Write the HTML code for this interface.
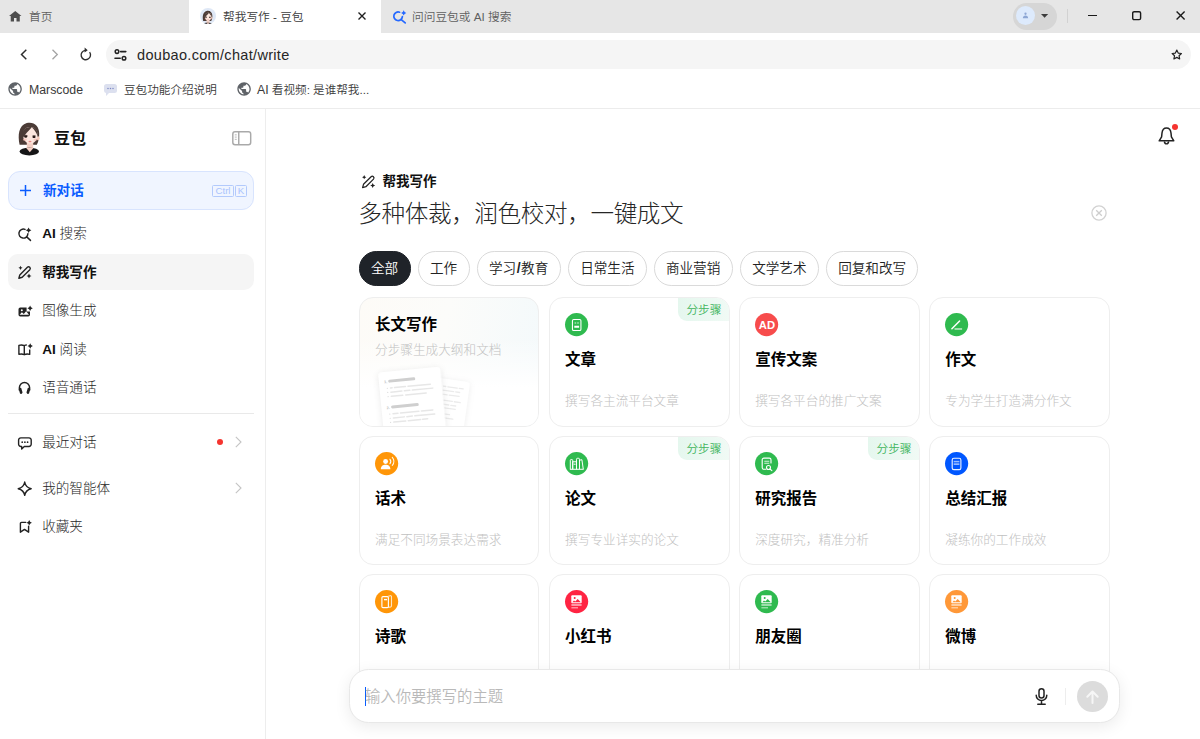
<!DOCTYPE html>
<html lang="zh-CN">
<head>
<meta charset="utf-8">
<title>帮我写作 - 豆包</title>
<style>
*{box-sizing:border-box;margin:0;padding:0}
html,body{width:1200px;height:739px;overflow:hidden;background:#fff}
body{font-family:"Liberation Sans","Noto Sans CJK SC",sans-serif;color:#1f1f1f;position:relative;font-weight:350}
.abs{position:absolute}
svg{display:block;overflow:visible}
/* ---------- browser chrome ---------- */
#tabbar{position:absolute;left:0;top:0;width:1200px;height:33px;background:#e6e6e6}
.tab{position:absolute;top:0;height:33px;font-size:11.700px;line-height:34px;color:#5f5f5f;white-space:nowrap}
#tab2{left:189px;width:192px;background:#fff;color:#3c3c3c}
#toolbar{position:absolute;left:0;top:33px;width:1200px;height:40px;background:#fff}
#urlpill{position:absolute;left:106px;top:7px;width:1085px;height:29px;border-radius:14.5px;background:#f5f5f5}
#url{position:absolute;left:31px;top:0;line-height:30px;font-size:14.500px;color:#262626;letter-spacing:.32px;font-weight:400}
#bookmarks{position:absolute;left:0;top:73px;width:1200px;height:36px;background:#fff;border-bottom:1px solid #ececec;font-size:11.600px;color:#3a3a3a}
.bm{position:absolute;top:0;line-height:34px;white-space:nowrap}
/* ---------- sidebar ---------- */
#sidebar{position:absolute;left:0;top:109px;width:266px;height:630px;border-right:1px solid #ededed;background:#fff}
.nav{position:absolute;left:8px;width:246px;height:36px;border-radius:10px;font-size:13.600px;line-height:36px;color:#262626;font-weight:300;white-space:nowrap}
.nav .t{position:absolute;left:34.200px;top:1.100px}
.nav b{font-weight:700;color:#111}
.nav svg{position:absolute;left:10px;top:10.500px}
/* ---------- main ---------- */
#main{position:absolute;left:266px;top:109px;width:934px;height:630px;overflow:hidden}
.chip{position:absolute;top:142.300px;height:34.500px;border:1px solid #dadada;border-radius:17.250px;font-size:13.600px;line-height:33px;text-align:center;color:#222;background:#fff;white-space:nowrap}
.card{position:absolute;width:180.450px;height:129px;border:1px solid #eeeeee;border-radius:14px;background:#fff;overflow:hidden}
.card .ic{position:absolute;left:15.200px;top:15.100px}
.card .tt{position:absolute;left:15px;top:50.200px;font-size:15.5px;font-weight:700;color:#000;line-height:24px;white-space:nowrap}
.card .ds{position:absolute;left:15px;top:94px;font-size:12.650px;color:#c1c1c1;line-height:18px;white-space:nowrap;font-weight:300}
.card .bdg{position:absolute;right:0;top:0;width:50.200px;height:23px;background:linear-gradient(90deg,#e5f7ee,#f0faf5);color:#3fb55d;font-size:11.700px;line-height:24px;padding-left:1px;text-align:center;border-bottom-left-radius:9px}
</style>
</head>
<body>
<!-- TAB BAR -->
<div id="tabbar">
  <div class="tab" id="tab1" style="left:0;width:189px"><span class="abs" style="left:29px">首页</span></div>
  <div class="tab" id="tab2"><span class="abs" style="left:34px">帮我写作 - 豆包</span></div>
  <div class="tab" id="tab3" style="left:381px;width:300px"><span class="abs" style="left:31px">问问豆包或 AI 搜索</span></div>

  <svg class="abs" style="left:8.500px;top:11.200px" width="12.500" height="10.400" viewBox="0 0 13 12" preserveAspectRatio="none"><path d="M6.500 0L0 5.800h1.800V12h3.400V8h2.600v4h3.400V5.800H13z" fill="#4d4d4d"/></svg>
  <div class="abs" style="left:200px;top:8px;width:16px;height:16px;border-radius:50%;background:#dfe8f6;overflow:hidden"><svg class="abs" style="left:2.4px;top:1.6px" width="11.2" height="16.8" viewBox="0 0 24 36">
<path d="M2.600 23.800C.6 14 1.600 4.500 9.800 2 17 .3 22.300 5 22.200 12.500 22.300 16.500 21.600 20.500 19.800 23.800z" fill="#4b3b36"/>
<path d="M9.800 19h6.400v8.500l-3.200 3.500-3.200-3.500z" fill="#f3cfc4"/>
<ellipse cx="12.300" cy="30.600" rx="9.700" ry="3.900" fill="#151516"/>
<path d="M9.200 27l3.600 4.300L16.500 27z" fill="#f3cfc4"/>
<ellipse cx="21.200" cy="17.300" rx="1.400" ry="2.100" fill="#f6cabb"/>
<path d="M6 14C6 8.500 9 6 13.200 6S20.600 9 20.600 14.500C20.600 19 17 22.600 13.200 22.600S6 19 6 14z" fill="#fce6de"/>
<path d="M5.300 17.500C4.300 10 8 5.300 14.800 6.200 12 9.500 8.500 12.500 5.300 17.500z" fill="#4b3b36"/>
<path d="M14.800 6.200C18.500 6.300 21 9.800 21 15.500 19.500 12 17.500 8.800 14.800 6.200z" fill="#4b3b36"/>
<ellipse cx="8.700" cy="15.600" rx="1.600" ry="1.250" fill="#2a1b18"/><ellipse cx="17" cy="15.900" rx="1.500" ry="1.200" fill="#2a1b18"/>
<path d="M6.800 14.900q1.800-1.300 3.800-.2M15.300 15q1.700-1 3.500 0" stroke="#2a1b18" stroke-width=".6" fill="none"/>
<ellipse cx="7.800" cy="18.600" rx="1.900" ry="1.200" fill="#f7bdb4" opacity=".75"/><ellipse cx="18.300" cy="18.700" rx="1.700" ry="1.100" fill="#f7bdb4" opacity=".75"/>
<ellipse cx="13" cy="20.500" rx="1.500" ry=".85" fill="#e68a87"/>
</svg></div>
  <svg class="abs" style="left:358px;top:12px" width="8" height="8" viewBox="0 0 8 8"><path d="M.5.500l7 7M7.500.500l-7 7" stroke="#1f1f1f" stroke-width="1.400" fill="none"/></svg>
  <svg class="abs" style="left:393px;top:10px" width="14" height="14" viewBox="0 0 14 14"><path d="M6.600 2.200A4.300 4.300 0 1 0 9.400 6.700M8.200 9.600l4 3.300" stroke="#2468ff" stroke-width="1.700" fill="none" stroke-linecap="round"/><path d="M10.70 0.30Q11.17 2.43 13.30 2.90Q11.17 3.37 10.70 5.50Q10.23 3.37 8.10 2.90Q10.23 2.43 10.70 0.30z" fill="#2468ff"/></svg>
  <div class="abs" style="left:1012.600px;top:2.600px;width:44.400px;height:27.200px;border-radius:13.600px;background:#d6d6d6"></div>
  <div class="abs" style="left:1016.300px;top:6.400px;width:19px;height:19px;border-radius:50%;background:#ddeafc"></div>
  <svg class="abs" style="left:1022.300px;top:12.400px" width="7" height="7" viewBox="0 0 8 8"><circle cx="4" cy="2" r="1.300" fill="#8ea7d4"/><path d="M1 7.200c0-2.200 1.200-3.200 3-3.200S7 5 7 7.200z" fill="#8ea7d4"/></svg>
  <svg class="abs" style="left:1041.200px;top:14.200px" width="7.200" height="3.800" viewBox="0 0 8 4.500" preserveAspectRatio="none"><path d="M0 0h8L4 4.500z" fill="#3c3c3c"/></svg>
  <div class="abs" style="left:1067px;top:9px;width:1px;height:14px;background:#d2d2d2"></div>
  <div class="abs" style="left:1087.800px;top:14.700px;width:9.500px;height:1.300px;background:#1a1a1a"></div>
  <svg class="abs" style="left:1131.600px;top:10.800px" width="9.300" height="9.300" viewBox="0 0 9.300 9.300"><rect x=".7" y=".7" width="7.900" height="7.900" rx="1.400" fill="none" stroke="#1a1a1a" stroke-width="1.400"/></svg>
  <svg class="abs" style="left:1176.300px;top:11.200px" width="9.200" height="9.200" viewBox="0 0 11 11"><path d="M.7.7l9.600 9.600M10.300.7L.7 10.300" stroke="#1a1a1a" stroke-width="1.650" fill="none"/></svg>
</div>
<!-- TOOLBAR -->
<div id="toolbar">

  <svg class="abs" style="left:20px;top:16px" width="8" height="11" viewBox="0 0 8 11"><path d="M6.300 .8L1.500 5.500l4.800 4.700" stroke="#2d2d2d" stroke-width="1.450" fill="none"/></svg>
  <svg class="abs" style="left:51.200px;top:16px" width="8" height="11" viewBox="0 0 8 11"><path d="M1.500 .8L6.300 5.500l-4.800 4.700" stroke="#a3a3a3" stroke-width="1.300" fill="none"/></svg>
  <svg class="abs" style="left:79px;top:14px" width="13" height="14" viewBox="0 0 13 14"><path d="M10.600 5.200A4.700 4.700 0 1 1 6.400 3.300" stroke="#2d2d2d" stroke-width="1.350" fill="none"/><path d="M5.600 .6l3.100 2.700-3.100 2.300z" fill="#2d2d2d"/></svg>
  <div id="urlpill"><svg class="abs" style="left:8px;top:8px" width="13" height="13" viewBox="0 0 13 13"><circle cx="3" cy="3.600" r="1.800" fill="none" stroke="#222" stroke-width="1.500"/><path d="M6.600 3.600h5.200M1 10.300h5.200" stroke="#222" stroke-width="1.600" fill="none" stroke-linecap="round"/><circle cx="10" cy="10.300" r="1.800" fill="none" stroke="#222" stroke-width="1.500"/></svg>
  <svg class="abs" style="left:1065.200px;top:9px" width="11.600" height="10.800" viewBox="0 0 14 13"><path d="M7 1.300l1.700 3.600 3.900.5-2.900 2.700.8 3.900L7 10.100 3.500 12l.8-3.900L1.400 5.400l3.900-.5z" fill="none" stroke="#222" stroke-width="1.400" stroke-linejoin="round"/></svg><div id="url">doubao.com/chat/write</div></div>
</div>
<!-- BOOKMARKS -->
<div id="bookmarks">
<svg class="abs" style="left:7.2px;top:8.400px" width="16.200" height="16.200" viewBox="0 0 24 24"><path d="M12 2C6.480 2 2 6.480 2 12s4.480 10 10 10 10-4.480 10-10S17.520 2 12 2zm-1 17.930c-3.950-.49-7-3.850-7-7.930 0-.62.080-1.210.21-1.790L9 15v1c0 1.100.9 2 2 2v1.930zm6.900-2.540c-.26-.81-1-1.390-1.900-1.390h-1v-3c0-.55-.45-1-1-1H8v-2h2c.55 0 1-.45 1-1V7h2c1.100 0 2-.9 2-2v-.41c2.930 1.190 5 4.060 5 7.410 0 2.080-.8 3.970-2.100 5.390z" fill="#5f6368"/></svg>
  <svg class="abs" style="left:104px;top:11px" width="13" height="12" viewBox="0 0 13 12"><path d="M2.500 0h8A2.500 2.500 0 0 1 13 2.500v4A2.500 2.500 0 0 1 10.500 9H5l-3 3V9A2.500 2.500 0 0 1 0 6.500v-4A2.500 2.500 0 0 1 2.500 0z" fill="#dce0ef"/><circle cx="4" cy="4.500" r=".75" fill="#7f89c4"/><circle cx="6.500" cy="4.500" r=".75" fill="#7f89c4"/><circle cx="9" cy="4.500" r=".75" fill="#7f89c4"/></svg>
<svg class="abs" style="left:235.65px;top:8.400px" width="16.200" height="16.200" viewBox="0 0 24 24"><path d="M12 2C6.480 2 2 6.480 2 12s4.480 10 10 10 10-4.480 10-10S17.520 2 12 2zm-1 17.930c-3.950-.49-7-3.850-7-7.930 0-.62.080-1.210.21-1.790L9 15v1c0 1.100.9 2 2 2v1.930zm6.900-2.540c-.26-.81-1-1.390-1.900-1.390h-1v-3c0-.55-.45-1-1-1H8v-2h2c.55 0 1-.45 1-1V7h2c1.100 0 2-.9 2-2v-.41c2.930 1.190 5 4.060 5 7.410 0 2.080-.8 3.970-2.100 5.390z" fill="#5f6368"/></svg>  <span class="bm" style="left:29px;font-size:12.300px;font-weight:400">Marscode</span>
  <span class="bm" style="left:124px">豆包功能介绍说明</span>
  <span class="bm" style="left:257px"><span style="font-size:12.300px">AI</span> 看视频: 是谁帮我...</span>
</div>
<!-- SIDEBAR -->
<div id="sidebar">
<svg class="abs" style="left:17px;top:12px" width="24" height="36" viewBox="0 0 24 36">
<path d="M2.600 23.800C.6 14 1.600 4.500 9.800 2 17 .3 22.300 5 22.200 12.500 22.300 16.500 21.600 20.500 19.800 23.800z" fill="#4b3b36"/>
<path d="M9.800 19h6.400v8.500l-3.200 3.500-3.200-3.500z" fill="#f3cfc4"/>
<ellipse cx="12.300" cy="30.600" rx="9.700" ry="3.900" fill="#151516"/>
<path d="M9.200 27l3.600 4.300L16.500 27z" fill="#f3cfc4"/>
<ellipse cx="21.200" cy="17.300" rx="1.400" ry="2.100" fill="#f6cabb"/>
<path d="M6 14C6 8.500 9 6 13.200 6S20.600 9 20.600 14.500C20.600 19 17 22.600 13.200 22.600S6 19 6 14z" fill="#fce6de"/>
<path d="M5.300 17.500C4.300 10 8 5.300 14.800 6.200 12 9.500 8.500 12.500 5.300 17.500z" fill="#4b3b36"/>
<path d="M14.800 6.200C18.500 6.300 21 9.800 21 15.500 19.500 12 17.500 8.800 14.800 6.200z" fill="#4b3b36"/>
<ellipse cx="8.700" cy="15.600" rx="1.600" ry="1.250" fill="#2a1b18"/><ellipse cx="17" cy="15.900" rx="1.500" ry="1.200" fill="#2a1b18"/>
<path d="M6.800 14.900q1.800-1.300 3.800-.2M15.300 15q1.700-1 3.500 0" stroke="#2a1b18" stroke-width=".6" fill="none"/>
<ellipse cx="7.800" cy="18.600" rx="1.900" ry="1.200" fill="#f7bdb4" opacity=".75"/><ellipse cx="18.300" cy="18.700" rx="1.700" ry="1.100" fill="#f7bdb4" opacity=".75"/>
<ellipse cx="13" cy="20.500" rx="1.500" ry=".85" fill="#e68a87"/>
</svg>
  <div class="abs" style="left:54px;top:17.800px;font-size:16px;font-weight:700;line-height:24px;color:#111">豆包</div>
  <svg class="abs" style="left:232.300px;top:21.700px" width="19.500" height="14.500" viewBox="0 0 20 15"><rect x=".75" y=".75" width="18.500" height="13.500" rx="2.300" fill="none" stroke="#a9a9a9" stroke-width="1.500"/><path d="M6.900 1v13" stroke="#a9a9a9" stroke-width="1.500"/><path d="M2.800 4h2M2.800 6.300h2M2.800 8.600h2" stroke="#b4b4b4" stroke-width="1"/></svg>
  <div class="abs" style="left:8px;top:62px;width:246px;height:38.700px;border-radius:12px;background:#f0f5ff;border:1px solid #d8e4fe"></div>
  <svg class="abs" style="left:20px;top:76px" width="11" height="11" viewBox="0 0 11 11"><path d="M5.500 0v11M0 5.500h11" stroke="#0a5cff" stroke-width="1.500"/></svg>
  <div class="abs" style="left:43px;top:72.300px;font-size:13.600px;font-weight:700;line-height:20px;color:#0a5cff">新对话</div>
  <div class="abs" style="left:212px;top:76px;width:22px;height:12px;border:1px solid #b3cafc;border-radius:1.500px;font-size:9.700px;line-height:10px;text-align:center;color:#a9c3fd">Ctrl</div>
  <div class="abs" style="left:235px;top:76px;width:12px;height:12px;border:1px solid #b3cafc;border-radius:1.500px;font-size:9.700px;line-height:10px;text-align:center;color:#a9c3fd">K</div>
  <div class="nav" style="top:106px"><svg width="15" height="15" viewBox="0 0 15 15"><path d="M7 3.400A4.500 4.500 0 1 0 9.900 7.800M8.700 10.900l3.800 3.500" stroke="#222" stroke-width="1.450" fill="none" stroke-linecap="round"/><path d="M10.60 1.50Q11.10 3.80 13.40 4.30Q11.10 4.80 10.60 7.10Q10.10 4.80 7.80 4.30Q10.10 3.80 10.60 1.50z" fill="#222"/></svg><span class="t"><b>AI</b> 搜索</span></div>
  <div class="nav" style="top:144.700px;height:36.500px;background:#f5f5f5"><svg width="15" height="15" viewBox="0 0 15 15"><g transform="translate(.3 1.600)"><path d="M.6 12.600L1.500 9.300 9.100 1.700A1.700 1.700 0 0 1 11.500 4.100L3.900 11.700z" stroke="#222" stroke-width="1.400" fill="none" stroke-linejoin="round"/><path d="M2.20 0.10Q2.58 1.82 4.30 2.20Q2.58 2.58 2.20 4.30Q1.82 2.58 0.10 2.20Q1.82 1.82 2.20 0.10zM10.70 7.90Q11.15 9.95 13.20 10.40Q11.15 10.85 10.70 12.90Q10.25 10.85 8.20 10.40Q10.25 9.95 10.70 7.90z" fill="#222"/></g></svg><span class="t"><b>帮我写作</b></span></div>
  <div class="nav" style="top:183px"><svg width="15" height="15" viewBox="0 0 15 15"><path d="M2.300 4.500H8.600V8.400H12V11.700A1.800 1.800 0 0 1 10.200 13.500H2.300A1.800 1.800 0 0 1 .5 11.700V6.300A1.800 1.800 0 0 1 2.300 4.500z" fill="#222"/><path d="M1.600 11.700l2.300-2.400 1.900 1.700 2.300-2.700 2.900 3.400z" fill="#fff"/><circle cx="3.800" cy="7.300" r="1" fill="#fff"/><path d="M12.10 2.60Q12.59 4.81 14.80 5.30Q12.59 5.79 12.10 8.00Q11.61 5.79 9.40 5.30Q11.61 4.81 12.10 2.60z" fill="#222"/></svg><span class="t">图像生成</span></div>
  <div class="nav" style="top:222px"><svg width="15" height="15" viewBox="0 0 15 15"><path d="M6.300 3.600C4.800 2.900 2.700 2.800 .9 3.300V12.300C2.700 11.800 4.800 11.900 6.300 12.700C7.800 11.900 9.900 11.800 11.700 12.300V7.400M6.300 3.600V12.700M6.300 3.600C7.100 3.200 8 3 8.900 2.900" stroke="#222" stroke-width="1.400" fill="none" stroke-linejoin="round"/><path d="M12.20 1.30Q12.69 3.51 14.90 4.00Q12.69 4.49 12.20 6.70Q11.71 4.49 9.50 4.00Q11.71 3.51 12.20 1.30z" fill="#222"/></svg><span class="t"><b>AI</b> 阅读</span></div>
  <div class="nav" style="top:260px"><svg width="15" height="15" viewBox="0 0 15 15"><path d="M1.400 10.500V7.500A5.100 5.100 0 0 1 11.600 7.500V10.500" stroke="#222" stroke-width="1.450" fill="none"/><path d="M.8 9.300A1.500 1.500 0 0 1 3.200 8.100L4.500 12.300A1.500 1.500 0 0 1 2 13.500zM12.200 9.300A1.500 1.500 0 0 0 9.800 8.100L8.500 12.300A1.500 1.500 0 0 0 11 13.500z" fill="#222"/></svg><span class="t">语音通话</span></div>
  <div class="nav" style="top:315px"><svg width="15" height="15" viewBox="0 0 15 15"><path d="M2.800 2.900H11A2.200 2.200 0 0 1 13.200 5.100V9.300A2.200 2.200 0 0 1 11 11.500H6.300L3.700 14V11.500H2.800A2.200 2.200 0 0 1 .6 9.300V5.100A2.200 2.200 0 0 1 2.800 2.900z" stroke="#222" stroke-width="1.400" fill="none" stroke-linejoin="round"/><circle cx="4.200" cy="7.200" r=".85" fill="#222"/><circle cx="6.900" cy="7.200" r=".85" fill="#222"/><circle cx="9.600" cy="7.200" r=".85" fill="#222"/></svg><span class="t">最近对话</span></div>
  <div class="nav" style="top:361px"><svg width="15" height="15" viewBox="0 0 15 15"><path d="M6.700 1C7.300 4.800 8.900 6.700 13.200 7.700C8.900 8.700 7.300 10.600 6.700 14.400C6.100 10.600 4.500 8.700 .2 7.700C4.500 6.700 6.100 4.800 6.700 1z" stroke="#222" stroke-width="1.400" fill="none" stroke-linejoin="round"/></svg><span class="t">我的智能体</span></div>
  <div class="nav" style="top:399px"><svg width="15" height="15" viewBox="0 0 15 15"><path d="M7.700 3.400H3.500A1.100 1.100 0 0 0 2.400 4.500V13.200L6.500 10.400 10.600 13.200V7.300" stroke="#222" stroke-width="1.400" fill="none" stroke-linejoin="round" stroke-linecap="round"/><path d="M11.20 1.10Q11.69 3.31 13.90 3.80Q11.69 4.29 11.20 6.50Q10.71 4.29 8.50 3.80Q10.71 3.31 11.20 1.10z" fill="#222"/></svg><span class="t">收藏夹</span></div>
  <div class="abs" style="left:8px;top:304px;width:246px;height:1px;background:#e9e9e9"></div>
  <div class="abs" style="left:217px;top:330px;width:6px;height:6px;border-radius:50%;background:#f5342f"></div>
  <svg class="abs" style="left:235px;top:327px" width="7" height="12" viewBox="0 0 7 12"><path d="M.8.800L6 6 .8 11.200" stroke="#c4c4c4" stroke-width="1.100" fill="none"/></svg>
  <svg class="abs" style="left:235px;top:373px" width="7" height="12" viewBox="0 0 7 12"><path d="M.8.800L6 6 .8 11.200" stroke="#c4c4c4" stroke-width="1.100" fill="none"/></svg>
</div>
<!-- MAIN -->
<div id="main">
  <svg class="abs" style="left:892.2px;top:18px" width="17" height="19" viewBox="0 0 17 19"><path d="M8.500 1.100C6 1.100 4.300 3.200 4 6l-.4 3.800L1.200 13.800h14.600L13.400 9.800 13 6C12.700 3.200 11 1.100 8.500 1.100z" stroke="#222" stroke-width="1.500" fill="none" stroke-linejoin="round"/><path d="M6.300 14.500c.3 1.600 1.100 2.400 2.200 2.400s1.900-.8 2.200-2.400" stroke="#222" stroke-width="1.400" fill="none"/></svg>
  <div class="abs" style="left:906.2px;top:15.4px;width:6px;height:6px;border-radius:50%;background:#f5342f"></div>
  <svg class="abs" style="left:96px;top:66.200px" width="14" height="14" viewBox="0 0 14 14"><path d="M.6 12.600L1.500 9.300 9.100 1.700A1.700 1.700 0 0 1 11.500 4.100L3.900 11.700z" stroke="#222" stroke-width="1.250" fill="none" stroke-linejoin="round"/><path d="M2.20 0.10Q2.58 1.82 4.30 2.20Q2.58 2.58 2.20 4.30Q1.82 2.58 0.10 2.20Q1.82 1.82 2.20 0.10zM10.70 7.90Q11.15 9.95 13.20 10.40Q11.15 10.85 10.70 12.90Q10.25 10.85 8.20 10.40Q10.25 9.95 10.70 7.90z" fill="#222"/></svg>
  <div class="abs" style="left:116.5px;top:64px;font-size:13.500px;font-weight:700;line-height:18px;color:#111;white-space:nowrap">帮我写作</div>
  <div class="abs" id="h1" style="left:92.300px;top:87.500px;font-size:23.600px;line-height:34px;color:#262626;white-space:nowrap;font-weight:300;letter-spacing:-.38px">多种体裁，润色校对，一键成文</div>
  <svg class="abs" style="left:824.5px;top:96px" width="16" height="16" viewBox="0 0 16 16"><circle cx="8" cy="8" r="7.100" fill="none" stroke="#d2d2d2" stroke-width="1.300"/><path d="M5.200 5.200l5.600 5.600M10.800 5.200l-5.600 5.600" stroke="#cdcdcd" stroke-width="1.300"/></svg>
  <div class="chip" style="left:92.75px;width:51.75px;background:#1f2329;border-color:#1f2329;color:#fff">全部</div>
  <div class="chip" style="left:151.5px;width:52.0px">工作</div>
  <div class="chip" style="left:210.75px;width:83.75px">学习<span style="font-weight:700;font-size:14px;margin:0 .5px">/</span>教育</div>
  <div class="chip" style="left:302px;width:78.75px">日常生活</div>
  <div class="chip" style="left:387.75px;width:78.75px">商业营销</div>
  <div class="chip" style="left:474px;width:78.75px">文学艺术</div>
  <div class="chip" style="left:560.25px;width:91.75px">回复和改写</div>
  <div class="card" style="left:93.0px;top:187.9px;height:130px;background:linear-gradient(100deg,#fdfbf7 0%,#fcfcfa 45%,#f3f9fb 100%)">
    <div class="abs" style="left:0;top:40px;width:180px;height:90px;background:linear-gradient(180deg,rgba(255,255,255,0),#fff 55%)"></div>
    <div class="tt" style="top:15.500px">长文写作</div>
    <div class="ds" style="top:43.500px">分步骤生成大纲和文档</div>
    <svg class="abs" style="left:0;top:0" width="180" height="129" viewBox="0 0 180 129"><g transform="translate(65.600 78) rotate(8)" style="filter:drop-shadow(0 1px 3px rgba(0,0,0,.07))"><rect x="0" y="0" width="45" height="70" rx="3.500" fill="#fff"/></g><g transform="translate(65.600 78) rotate(8)"><path d="M19.0 7.6H21.5M23.5 7.6H33.0M35.0 7.6H39.0" stroke="#ebebeb" stroke-width="1.3" stroke-linecap="round"/><path d="M19.0 11.6H30.0M32.0 11.6H36.0" stroke="#ebebeb" stroke-width="1.3" stroke-linecap="round"/><path d="M19.0 15.6H24.0M26.0 15.6H36.0" stroke="#ebebeb" stroke-width="1.3" stroke-linecap="round"/><path d="M19.0 21.5H30.0M32.0 21.5H38.0" stroke="#ebebeb" stroke-width="1.3" stroke-linecap="round"/><path d="M19.0 25.5H27.0M29.0 25.5H34.0" stroke="#ebebeb" stroke-width="1.3" stroke-linecap="round"/><path d="M19.0 29.0H21.0M23.0 29.0H34.0" stroke="#ebebeb" stroke-width="1.3" stroke-linecap="round"/><path d="M19.0 35.0H29.0" stroke="#ebebeb" stroke-width="1.3" stroke-linecap="round"/><path d="M19.0 39.0H33.0" stroke="#ebebeb" stroke-width="1.3" stroke-linecap="round"/><path d="M19.0 42.5H24.0" stroke="#ebebeb" stroke-width="1.3" stroke-linecap="round"/><path d="M19.0 46.0H23.0" stroke="#ebebeb" stroke-width="1.3" stroke-linecap="round"/></g><g transform="translate(18 74.600) rotate(-5.500)" style="filter:drop-shadow(0 1px 3px rgba(0,0,0,.09))"><rect x="0" y="0" width="62.500" height="80" rx="3.500" fill="#fff"/></g><g transform="translate(18 74.600) rotate(-5.500)"><text x="5.200" y="11.300" font-size="3.800" font-weight="700" fill="#bdbdbd" font-family="Liberation Sans,sans-serif">1.</text><path d="M10.8 9.6H35.0" stroke="#cfcfcf" stroke-width="3" stroke-linecap="round"/><path d="M11.0 16.5H12.6M15.0 16.5H26.0M28.5 16.5H51.0" stroke="#e7e7e7" stroke-width="1.5" stroke-linecap="round"/><path d="M11.0 20.7H22.0M24.5 20.7H30.0M32.5 20.7H53.0" stroke="#e7e7e7" stroke-width="1.5" stroke-linecap="round"/><path d="M11.0 24.9H22.5M25.5 24.9H46.0" stroke="#e7e7e7" stroke-width="1.5" stroke-linecap="round"/><circle cx="7.800" cy="16.5" r=".6" fill="#dcdcdc"/><circle cx="7.800" cy="20.7" r=".6" fill="#dcdcdc"/><circle cx="7.800" cy="24.9" r=".6" fill="#dcdcdc"/><text x="5.200" y="37.300" font-size="3.800" font-weight="700" fill="#bdbdbd" font-family="Liberation Sans,sans-serif">2.</text><path d="M11.2 35.6H36.0" stroke="#cfcfcf" stroke-width="3" stroke-linecap="round"/><path d="M11.0 42.4H16.0M18.5 42.4H37.0M39.5 42.4H51.0" stroke="#e7e7e7" stroke-width="1.5" stroke-linecap="round"/><path d="M11.0 46.6H22.0M24.5 46.6H30.0M32.5 46.6H52.5" stroke="#e7e7e7" stroke-width="1.5" stroke-linecap="round"/><path d="M11.0 50.8H23.0M25.5 50.8H38.0M40.0 50.8H45.0" stroke="#e7e7e7" stroke-width="1.5" stroke-linecap="round"/><circle cx="7.800" cy="42.4" r=".6" fill="#dcdcdc"/><circle cx="7.800" cy="46.6" r=".6" fill="#dcdcdc"/><circle cx="7.800" cy="50.8" r=".6" fill="#dcdcdc"/></g></svg>
  </div>
  <div class="card" style="left:283.1px;top:187.9px;height:130px"><svg class="ic" width="23.200" height="23.200" viewBox="0 0 23.200 23.200"><circle cx="11.600" cy="11.600" r="11.600" fill="#2fba4f"/><rect x="7.450" y="6.550" width="8.500" height="10.900" rx="1.300" fill="none" stroke="#fff" stroke-width="1.100"/><path d="M9.600 10h1.600M12.200 10h1.600" stroke="#fff" stroke-width="1.300" opacity=".55"/><path d="M9.300 13.700h4.800" stroke="#fff" stroke-width="1.900"/></svg><div class="tt">文章</div><div class="ds">撰写各主流平台文章</div><div class="bdg">分步骤</div></div>
  <div class="card" style="left:473.2px;top:187.9px;height:130px"><svg class="ic" width="23.200" height="23.200" viewBox="0 0 23.200 23.200"><circle cx="11.600" cy="11.600" r="11.600" fill="#f74c4c"/><text x="11.900" y="16.100" font-family="Liberation Sans,sans-serif" font-size="11.300" font-weight="700" fill="#fff" text-anchor="middle">AD</text></svg><div class="tt">宣传文案</div><div class="ds">撰写各平台的推广文案</div></div>
  <div class="card" style="left:663.3px;top:187.9px;height:130px"><svg class="ic" width="23.200" height="23.200" viewBox="0 0 23.200 23.200"><circle cx="11.600" cy="11.600" r="11.600" fill="#2fba4f"/><path d="M6.900 15.700L14.600 8" stroke="#fff" stroke-width="1.500" fill="none" stroke-linecap="round"/><path d="M9.500 16h7.600" stroke="#fff" stroke-width="1.600" opacity=".65"/></svg><div class="tt">作文</div><div class="ds">专为学生打造满分作文</div></div>
  <div class="card" style="left:93.0px;top:327.15px;height:128.85px"><svg class="ic" width="23.200" height="23.200" viewBox="0 0 23.200 23.200"><circle cx="11.600" cy="11.600" r="11.600" fill="#ff9608"/><circle cx="10.600" cy="9.500" r="2.450" fill="#fff"/><path d="M5.800 17.300C5.800 14.200 8 12.800 10.600 12.800S15.400 14.200 15.400 17.300z" fill="#fff"/><path d="M15 7.300C15.900 8.500 15.900 10.500 15 11.700" stroke="#fff" stroke-width="1.100" fill="none" stroke-linecap="round"/><path d="M17.300 5.400C19.200 7.700 19.200 11.100 17.300 13.400" stroke="#fff" stroke-width="1.100" fill="none" stroke-linecap="round" opacity=".9"/></svg><div class="tt">话术</div><div class="ds">满足不同场景表达需求</div></div>
  <div class="card" style="left:283.1px;top:327.15px;height:128.85px"><svg class="ic" width="23.200" height="23.200" viewBox="0 0 23.200 23.200"><circle cx="11.600" cy="11.600" r="11.600" fill="#2fba4f"/><path d="M5.300 17.300V8.400A.8 .8 0 0 1 6.100 7.600H6.900A.8 .8 0 0 1 7.700 8.400V17.300M7.700 17.300V9.800H11.500V17.300M8.600 12.200h2M11.500 17.300V7.300A1 1 0 0 1 12.500 6.300H13.500A1 1 0 0 1 14.500 7.300V17.300M14.700 8.200L16.900 7.700 18.300 17.300M4.900 17.300H18.600" stroke="#fff" stroke-width="1" fill="none" stroke-linejoin="round"/></svg><div class="tt">论文</div><div class="ds">撰写专业详实的论文</div><div class="bdg">分步骤</div></div>
  <div class="card" style="left:473.2px;top:327.15px;height:128.85px"><svg class="ic" width="23.200" height="23.200" viewBox="0 0 23.200 23.200"><circle cx="11.600" cy="11.600" r="11.600" fill="#2fba4f"/><path d="M16 11V7.800A1.700 1.700 0 0 0 14.300 6.100H8.900A1.700 1.700 0 0 0 7.200 7.800V15.600A1.700 1.700 0 0 0 8.900 17.300H10.800" stroke="#fff" stroke-width="1.150" fill="none" stroke-linecap="round"/><path d="M9.300 9.300h5M9.300 11.200h5" stroke="#fff" stroke-width="1.100" opacity=".8"/><circle cx="13.500" cy="15.500" r="2" fill="none" stroke="#fff" stroke-width="1.100"/><path d="M15 17l1.900 1.700" stroke="#fff" stroke-width="1.100" stroke-linecap="round"/></svg><div class="tt">研究报告</div><div class="ds">深度研究，精准分析</div><div class="bdg">分步骤</div></div>
  <div class="card" style="left:663.3px;top:327.15px;height:128.85px"><svg class="ic" width="23.200" height="23.200" viewBox="0 0 23.200 23.200"><circle cx="11.600" cy="11.600" r="11.600" fill="#0057ff"/><rect x="7.200" y="6.300" width="8.700" height="11.300" rx="1.700" fill="none" stroke="#fff" stroke-width="1.150" opacity=".92"/><path d="M8.700 9.600h5.700" stroke="#fff" stroke-width="1.500" opacity=".6"/><path d="M8.700 12.100h5.700" stroke="#fff" stroke-width="1.100" opacity=".9"/></svg><div class="tt">总结汇报</div><div class="ds">凝练你的工作成效</div></div>
  <div class="card" style="left:93.0px;top:465.3px;height:128.85px"><svg class="ic" width="23.200" height="23.200" viewBox="0 0 23.200 23.200"><circle cx="11.600" cy="11.600" r="11.600" fill="#ff9608"/><path d="M13.200 6.300L15.300 5.700A1 1 0 0 1 16.500 6.700V15.900A1 1 0 0 1 15.800 16.900L13.200 17.600" stroke="#fff" stroke-width="1.100" fill="none" opacity=".75"/><rect x="6.900" y="6.700" width="6.500" height="10.900" rx="1.100" fill="none" stroke="#fff" stroke-width="1.150"/><rect x="9" y="8.900" width="3.100" height="1.400" fill="#fff"/></svg><div class="tt">诗歌</div></div>
  <div class="card" style="left:283.1px;top:465.3px;height:128.85px"><svg class="ic" width="23.200" height="23.200" viewBox="0 0 23.200 23.200"><circle cx="11.600" cy="11.600" r="11.600" fill="#ff2442"/><rect x="6.300" y="5.300" width="10.400" height="7.900" rx=".9" fill="#fff"/><path d="M7.300 12.300L9 10.600 10.300 11.600 12.700 8.900 15.800 12.300z" fill="#ff2442"/><circle cx="9.700" cy="8" r="1" fill="#ff2442"/><path d="M6.400 15h10.200" stroke="#fff" stroke-width="1.200" opacity=".88"/><path d="M6.400 17.800h6.600" stroke="#fff" stroke-width="1.200" opacity=".6"/></svg><div class="tt">小红书</div></div>
  <div class="card" style="left:473.2px;top:465.3px;height:128.85px"><svg class="ic" width="23.200" height="23.200" viewBox="0 0 23.200 23.200"><circle cx="11.600" cy="11.600" r="11.600" fill="#2fba4f"/><rect x="6.300" y="5.300" width="10.400" height="7.900" rx=".9" fill="#fff"/><path d="M7.300 12.300L9 10.600 10.300 11.600 12.700 8.900 15.800 12.300z" fill="#2fba4f"/><circle cx="9.700" cy="8" r="1" fill="#2fba4f"/><path d="M6.400 15h10.200" stroke="#fff" stroke-width="1.200" opacity=".88"/><path d="M6.400 17.800h6.600" stroke="#fff" stroke-width="1.200" opacity=".6"/></svg><div class="tt">朋友圈</div></div>
  <div class="card" style="left:663.3px;top:465.3px;height:128.85px"><svg class="ic" width="23.200" height="23.200" viewBox="0 0 23.200 23.200"><circle cx="11.600" cy="11.600" r="11.600" fill="#ff9838"/><rect x="6.300" y="5.300" width="10.400" height="7.900" rx=".9" fill="#fff"/><path d="M7.300 12.300L9 10.600 10.300 11.600 12.700 8.900 15.800 12.300z" fill="#ff9838"/><circle cx="9.700" cy="8" r="1" fill="#ff9838"/><path d="M6.400 15h10.200" stroke="#fff" stroke-width="1.200" opacity=".88"/><path d="M6.400 17.800h6.600" stroke="#fff" stroke-width="1.200" opacity=".6"/></svg><div class="tt">微博</div></div>
  <div class="abs" style="left:83.200px;top:560px;width:771px;height:54px;border-radius:19.500px;background:#fff;border:1px solid #e8e8e8;box-shadow:0 4px 16px rgba(0,0,0,.08)"></div>
  <div class="abs" style="left:98.600px;top:578px;width:1.300px;height:18.600px;background:#0a5cff"></div>
  <div class="abs" style="left:99px;top:575.500px;font-size:15.350px;line-height:24px;color:#b9b9b9;white-space:nowrap">输入你要撰写的主题</div>
  <svg class="abs" style="left:769px;top:579px" width="13" height="17" viewBox="0 0 13 17"><rect x="4" y=".8" width="5" height="9.200" rx="2.500" fill="none" stroke="#222" stroke-width="1.500"/><path d="M1.200 7.300a5.300 5.300 0 0 0 10.600 0M6.500 12.800v3M2.800 16.200h7.400" stroke="#222" stroke-width="1.500" fill="none" stroke-linecap="round"/></svg>
  <div class="abs" style="left:799px;top:579px;width:1px;height:17px;background:#ededed"></div>
  <div class="abs" style="left:811.2px;top:572px;width:31px;height:31px;border-radius:50%;background:#dcdcdc"></div>
  <svg class="abs" style="left:820.2px;top:580.5px" width="13" height="14" viewBox="0 0 13 14"><path d="M6.500 13V1.500M1.300 6.700l5.200-5.200 5.200 5.200" stroke="#f6f6f6" stroke-width="2" fill="none" stroke-linecap="round" stroke-linejoin="round"/></svg>
</div>
</body>
</html>
